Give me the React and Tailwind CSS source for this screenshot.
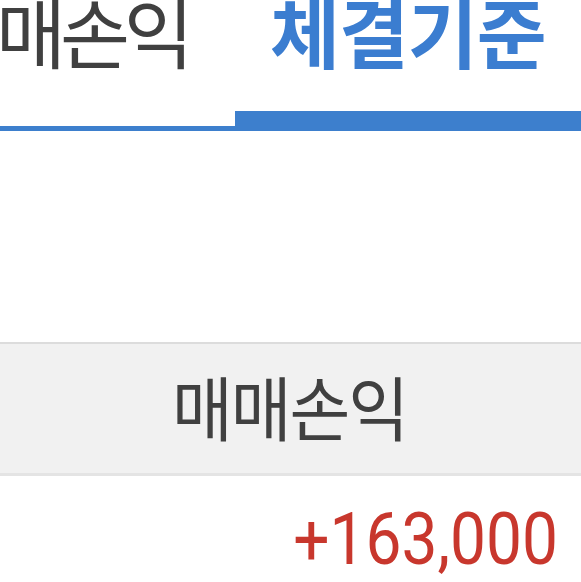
export default function App() {
  const kr = { fontFamily: '"Noto Sans CJK KR", "Noto Sans", sans-serif' };
  return (
    <div className="w-[581px] h-[582px] overflow-hidden bg-white flex flex-col">
      <div className="flex h-[131px] shrink-0">
        <div className="w-[235px] shrink-0 border-b-[5px] border-[#3d7fcd] flex items-start">
          <span style={kr} className="inline-block text-[76px] leading-none text-[#404040] -ml-[4px] mt-[-8px] tracking-[-6px] whitespace-nowrap">매손익</span>
        </div>
        <div className="flex-1 border-b-[20px] border-[#3d7fcd] flex items-start">
          <span style={kr} className="inline-block text-[76px] leading-none font-bold text-[#3b7dd0] ml-[35px] mt-[-8px] tracking-[-1px] whitespace-nowrap">체결기준</span>
        </div>
      </div>
      <div className="h-[211px] shrink-0" />
      <div className="h-[134px] shrink-0 bg-[#f1f1f1] border-t-[2px] border-[#dcdcdc] border-b-[3px] border-b-[#e4e4e4] flex items-center pl-[172px] pb-[8px]">
        <span style={kr} className="inline-block text-[66px] leading-none text-[#404040] tracking-[-2px] scale-y-[1.06] whitespace-nowrap">매매손익</span>
      </div>
      <div className="flex-1 flex items-center justify-end pr-[23px] pt-[22px]">
        <span style={{ fontFamily: 'Roboto, sans-serif' }} className="inline-block text-[64px] leading-none text-[#c8372d] scale-y-[1.12]">+163,000</span>
      </div>
    </div>
  );
}
